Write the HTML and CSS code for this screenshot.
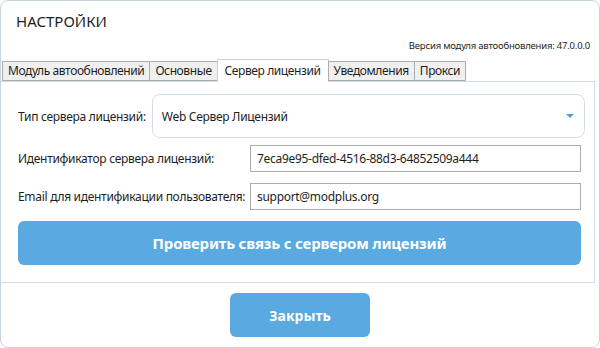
FILE: index.html
```html
<!DOCTYPE html>
<html lang="ru">
<head>
<meta charset="utf-8">
<link rel="stylesheet" href="styles.css">
</head>
<body>
<div class="window">
  <div class="title">НАСТРОЙКИ</div>
  <div class="version">Версия модуля автообновления: 47.0.0.0</div>
  <div class="tabs">
    <div class="tab">Модуль автообновлений</div>
    <div class="tab">Основные</div>
    <div class="tab active">Сервер лицензий</div>
    <div class="tab">Уведомления</div>
    <div class="tab">Прокси</div>
  </div>
  <div class="panel">
    <div class="row">
      <span class="label">Тип сервера лицензий:</span>
      <div class="combo">
        <span>Web Сервер Лицензий</span>
        <svg class="arrow" width="8" height="4" viewBox="0 0 8 4"><path d="M0 0H8L4 4Z" fill="#5a9fd8"/></svg>
      </div>
    </div>
    <div class="row tight">
      <span class="label wide">Идентификатор сервера лицензий:</span>
      <div class="input">7eca9e95-dfed-4516-88d3-64852509a444</div>
    </div>
    <div class="row">
      <span class="label wide">Email для идентификации пользователя:</span>
      <div class="input">support@modplus.org</div>
    </div>
    <div class="btn check">Проверить связь с сервером лицензий</div>
  </div>
  <div class="footer">
    <div class="btn close">Закрыть</div>
  </div>
</div>
</body>
</html>
```
FILE: styles.css
```css
* { box-sizing: border-box; }
html, body { margin: 0; padding: 0; background: #ffffff; }
body {
  font-family: "Noto Sans", "Open Sans", sans-serif;
  color: #1e1e1e;
}
.window {
  width: 600px;
  height: 348px;
  border: 1px solid #c9d4df;
  border-radius: 8px;
  display: flex;
  flex-direction: column;
  overflow: hidden;
}
.title {
  font-size: 15px;
  line-height: 20px;
  padding: 10px 0 0 15px;
  height: 38px;
}
.version {
  font-size: 9.5px;
  line-height: 14px;
  text-align: right;
  padding-right: 9px;
  height: 20px;
  letter-spacing: -0.2px;
}
.tabs {
  display: flex;
  align-items: flex-end;
  padding-left: 1px;
  height: 22px;
  position: relative;
  z-index: 1;
}
.tab {
  font-size: 12px;
  height: 20px;
  line-height: 18px;
  padding: 0 5px;
  background: #f0f0f0;
  border: 1px solid #acacac;
  margin-right: -1px;
  letter-spacing: -0.4px;
}
.tab.active {
  background: #ffffff;
  height: 23px;
  line-height: 21px;
  padding: 0 7px;
  border-color: #cfcfcf;
  border-bottom: none;
  margin-bottom: -1px;
}
.panel {
  border-top: 1px solid #d4dce4;
  border-right: 1px solid #d4dce4;
  border-bottom: 1px solid #d4dce4;
  margin-right: 4px;
  height: 202px;
  padding: 12px 13px 0 17px;
  display: flex;
  flex-direction: column;
  gap: 11px;
}
.row {
  display: flex;
  align-items: center;
  font-size: 12px;
}
.row.tight { margin-top: -4px; }
.label { letter-spacing: -0.3px; white-space: nowrap; }
.label.wide { width: 232px; }
.combo {
  margin-left: 6px;
  margin-right: -4px;
  flex: 1;
  height: 44px;
  border: 1px solid #d5dde6;
  border-radius: 8px;
  display: flex;
  align-items: center;
  justify-content: space-between;
  padding: 0 10px 0 9px;
  letter-spacing: -0.3px;
}
.arrow { display: block; }
.input {
  flex: 1;
  height: 27px;
  border: 1px solid #acacac;
  line-height: 25px;
  padding-left: 6px;
  letter-spacing: -0.3px;
}
.btn {
  background: #5aa9e1;
  color: #ffffff;
  font-weight: bold;
  display: flex;
  align-items: center;
  justify-content: center;
  border-radius: 6px;
}
.check {
  height: 44px;
  font-size: 15px;
  letter-spacing: -0.2px;
}
.footer {
  flex: 1;
  display: flex;
  justify-content: center;
  padding-top: 10px;
}
.close {
  width: 140px;
  height: 44px;
  font-size: 14px;
}
```
